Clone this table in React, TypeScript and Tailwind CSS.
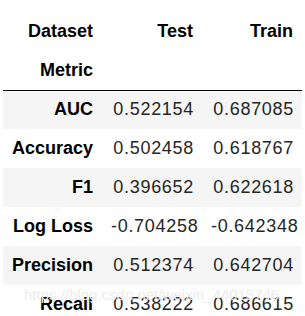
const rows = [
  ["AUC", "0.522154", "0.687085"],
  ["Accuracy", "0.502458", "0.618767"],
  ["F1", "0.396652", "0.622618"],
  ["Log Loss", "-0.704258", "-0.642348"],
  ["Precision", "0.512374", "0.642704"],
  ["Recall", "0.538222", "0.686615"],
];

export default function App() {
  return (
    <div className="bg-white h-[316px] overflow-hidden pt-[12px] px-[3px] font-['Liberation_Sans',Arial,sans-serif] text-[18px] text-black relative">
      <table className="w-[299px] border-collapse table-fixed">
        <colgroup>
          <col className="w-[99px]" />
          <col className="w-[100px]" />
          <col className="w-[100px]" />
        </colgroup>
        <thead className="border-b border-black">
          <tr className="h-[39px]">
            <th className="text-right font-bold px-[9px]">Dataset</th>
            <th className="text-right font-bold px-[9px]">Test</th>
            <th className="text-right font-bold px-[9px]">Train</th>
          </tr>
          <tr className="h-[39px]">
            <th className="text-right font-bold px-[9px]">Metric</th>
            <th />
            <th />
          </tr>
        </thead>
        <tbody>
          {rows.map((r, i) => (
            <tr key={r[0]} className={i % 2 === 0 ? "h-[39px] bg-[#f5f5f5]" : "h-[39px]"}>
              <th className="text-right font-bold px-[9px] whitespace-nowrap">{r[0]}</th>
              <td className="text-right pl-[9px] pr-[8px] tracking-[0.7px] text-[#262626] whitespace-nowrap">{r[1]}</td>
              <td className="text-right pl-[9px] pr-[8px] tracking-[0.7px] text-[#262626] whitespace-nowrap">{r[2]}</td>
            </tr>
          ))}
        </tbody>
      </table>
      <div className="absolute left-[24px] top-[284px] text-[15px] text-[#ececec] pointer-events-none whitespace-nowrap">
        https://blog.csdn.net/weixin_44015746
      </div>
    </div>
  );
}
